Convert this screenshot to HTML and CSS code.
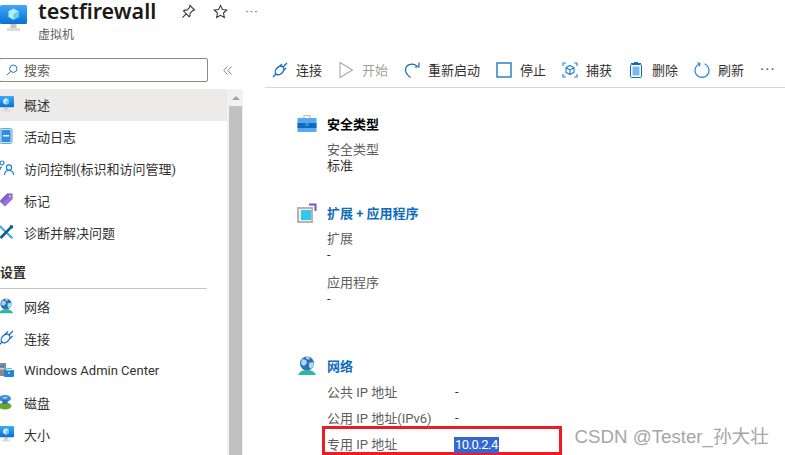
FILE: index.html
```html
<!DOCTYPE html>
<html lang="zh">
<head>
    <meta charset="UTF-8">
    <meta name="viewport" content="width=device-width, initial-scale=1.0">
    <title>testfirewall</title>
    <link rel="stylesheet" href="styles.css">
</head>
<body>
    <svg class="defs" width="0" height="0">
        <defs>
            <linearGradient id="screen" x1="0" y1="0" x2="0" y2="1">
                <stop offset="0" stop-color="#3fa9f5"/>
                <stop offset="1" stop-color="#0a6fd6"/>
            </linearGradient>
            <symbol id="vm" viewBox="0 0 27 27">
                <rect x="0" y="0" width="27" height="19" rx="1.5" fill="url(#screen)"/>
                <path d="M13.5 3.5l5 2.8v5.6l-5 2.9-5-2.9V6.300z" fill="#b5ecf7"/>
                <path d="M13.500 9l5-2.700v5.600l-5 2.900z" fill="#5fd0ea"/>
                <path d="M10.500 19h6v4h-6z" fill="#c4c4c4"/>
                <path d="M7 23h13v3H7z" fill="#dadada"/>
            </symbol>
            <symbol id="globe" viewBox="0 0 20 20">
                <circle cx="10" cy="7.500" r="7" fill="#2f6fb8"/>
                <path d="M5 3l4 1 1 3-3 3-3-2zM12 7l4-1 1 3-3 4-2-2zM9 0.800l4 1-1 2-3-1z" fill="#a5dcf0"/>
                <path d="M1 19c2-4 5-5 9-5s7 1 9 5z" fill="#2fb8a0"/>
            </symbol>
        </defs>
    </svg>

    <header class="title-bar">
        <svg class="title-icon"><use href="#vm"/></svg>
        <div class="title-text">
            <div class="title-row">
                <h1>testfirewall</h1>
                <svg class="title-action" viewBox="0 0 16 16" fill="none" stroke="#333" stroke-width="1.100"><path d="M9.500 1.500l5 5-2 .5-3 3 .2 2.500-1 1-6-6 1-1 2.500.2 3-3zM5.500 10.500L1.500 14.500"/></svg>
                <svg class="title-action" viewBox="0 0 16 16" fill="none" stroke="#333" stroke-width="1.100"><path d="M8 1.500l2 4.300 4.700.6-3.500 3.200.9 4.700L8 12l-4.100 2.300.9-4.700L1.300 6.400 6 5.800z"/></svg>
                <span class="title-more">···</span>
            </div>
            <div class="subtitle">虚拟机</div>
        </div>
    </header>

    <div class="main">
        <aside class="sidebar">
            <div class="search-row">
                <div class="search-box">
                    <svg class="search-icon" viewBox="0 0 14 14" fill="none" stroke="#0f6cbd" stroke-width="1.100"><circle cx="8.500" cy="5.500" r="4.300"/><path d="M5.500 8.500L1 13"/></svg>
                    <span class="search-text">搜索</span>
                </div>
                <svg class="collapse" viewBox="0 0 9 9" fill="none" stroke="#8a8886"><path d="M4.500 .5L.8 4.500l3.700 4M8.500 .5L4.800 4.500l3.700 4"/></svg>
            </div>
            <div class="nav-wrap">
                <nav class="nav">
                    <a class="nav-item active"><svg class="nav-icon"><use href="#vm"/></svg>概述</a>
                    <a class="nav-item">
                        <svg class="nav-icon" viewBox="0 0 16 16"><rect x="2" y="0.500" width="12" height="15" rx="1.500" fill="#cfe6f8" stroke="#5ea9e6"/><rect x="3.500" y="2" width="9" height="12" fill="#2f8ee0"/><rect x="5" y="7" width="6" height="1.500" fill="#fff"/></svg>
                        活动日志
                    </a>
                    <a class="nav-item">
                        <svg class="nav-icon" viewBox="0 0 16 16" fill="none" stroke="#1f7fd6" stroke-width="1.200"><circle cx="4" cy="3" r="2"/><path d="M2 10c0-2 .5-3 2-3"/><circle cx="11" cy="7.500" r="2.600"/><path d="M6.500 15c0-3 2-4.500 4.500-4.500s4.500 1.500 4.500 4.500"/></svg>
                        访问控制(标识和访问管理)
                    </a>
                    <a class="nav-item">
                        <svg class="nav-icon" viewBox="0 0 16 16"><path d="M9 1.500h5.500V7l-7.500 7.500-5.500-5.500z" fill="#8661c5"/><path d="M14.500 1.500V7l-7.500 7.500-2.700-2.700z" fill="#a67af4" opacity=".6"/><circle cx="11.800" cy="4.200" r="1" fill="#e4d6fa"/></svg>
                        标记
                    </a>
                    <a class="nav-item">
                        <svg class="nav-icon" viewBox="0 0 16 16"><path d="M2 1L.8 2.500 13.500 15l1.700-1.500z" fill="#38abd6"/><path d="M15 1.500l-2.500-.5-1 2L1.500 13l2 2L13 5l2-1z" fill="#0f5c87"/></svg>
                        诊断并解决问题
                    </a>
                    <div class="nav-heading">设置</div>
                    <a class="nav-item"><svg class="nav-icon"><use href="#globe"/></svg>网络</a>
                    <a class="nav-item">
                        <svg class="nav-icon" viewBox="0 0 16 16" fill="none" stroke="#1f6fd0" stroke-width="1.300"><ellipse cx="7.500" cy="8.500" rx="3.500" ry="5" transform="rotate(45 7.500 8.500)"/><path d="M1 15l3-3M11 5l4-4M7 4.500l3-3M11.500 9l3-3"/></svg>
                        连接
                    </a>
                    <a class="nav-item">
                        <svg class="nav-icon" viewBox="0 0 16 16"><rect x="0" y="1" width="8" height="13" fill="#8a8a8a"/><rect x="1.500" y="3" width="5" height="2" fill="#2f8ee0"/><rect x="1.500" y="6" width="5" height="1.500" fill="#d0d0d0"/><rect x="6" y="8" width="10" height="7" rx="1" fill="#1f86dc"/><rect x="9" y="6.500" width="4" height="2" fill="none" stroke="#5aaeea"/><rect x="10" y="10.500" width="2" height="1" fill="#fff"/></svg>
                        Windows Admin Center
                    </a>
                    <a class="nav-item">
                        <svg class="nav-icon" viewBox="0 0 16 16"><ellipse cx="7" cy="12" rx="6.500" ry="3.500" fill="#6aa52b"/><ellipse cx="7" cy="4.500" rx="6" ry="3.500" fill="#3c8ad6"/><rect x="4.500" y="6" width="5" height="4" fill="#2e6fb3"/><ellipse cx="7" cy="3.800" rx="2.500" ry="1" fill="#a5d5f5"/></svg>
                        磁盘
                    </a>
                    <a class="nav-item"><svg class="nav-icon"><use href="#vm"/></svg>大小</a>
                </nav>
                <div class="scrollbar">
                    <div class="scroll-up"></div>
                    <div class="scroll-thumb"></div>
                </div>
            </div>
        </aside>

        <section class="content">
            <div class="toolbar">
                <button class="tool">
                    <svg viewBox="0 0 16 16" fill="none" stroke="#0f6cbd" stroke-width="1.300"><ellipse cx="7.500" cy="8.500" rx="3.500" ry="5" transform="rotate(45 7.500 8.500)"/><path d="M1 15l3-3M11 5l4-4M7.500 4.500l2.500-2.500M11.500 8.500l2.500-2.500"/></svg>
                    连接
                </button>
                <button class="tool disabled">
                    <svg viewBox="0 0 16 16" fill="none" stroke="#a8a8a8" stroke-width="1.100"><path d="M2 .5l12.500 7.500L2 15.500z"/></svg>
                    开始
                </button>
                <button class="tool">
                    <svg viewBox="0 0 16 16" fill="none" stroke="#0f6cbd" stroke-width="1.200"><path d="M13.500 4.500C10 .5 1.500 1.500 1.500 8c0 3 2.500 5.500 5 7.500"/><path d="M15 .5v4.500h-4.500"/></svg>
                    重新启动
                </button>
                <button class="tool">
                    <svg viewBox="0 0 16 16" fill="none" stroke="#0f6cbd" stroke-width="1.300"><rect x="1" y="1" width="14" height="14"/></svg>
                    停止
                </button>
                <button class="tool">
                    <svg viewBox="0 0 16 16" fill="none" stroke="#2b88d8" stroke-width="1.200"><path d="M1 4V1h3M12 1h3v3M15 12v3h-3M4 15H1v-3"/><path d="M8 3.500l4 2.200v4.600l-4 2.200-4-2.200V5.700zM4 5.700l4 2.300 4-2.300M8 8v4.500"/></svg>
                    捕获
                </button>
                <button class="tool">
                    <svg viewBox="0 0 16 16"><path d="M3 1.500h10M6 .500h4" stroke="#0f6cbd" fill="none"/><rect x="2.500" y="2.500" width="11" height="13" rx="1" fill="#fff" stroke="#0f6cbd"/><rect x="4.500" y="4.500" width="7" height="9" fill="#7fb8e8"/></svg>
                    删除
                </button>
                <button class="tool">
                    <svg viewBox="0 0 16 16" fill="none" stroke="#1f86dc" stroke-width="1.200"><path d="M5.500 1.800A7 7 0 1 0 10.500 1.800"/><path d="M3.500 .500l2.500 1.300-1 2.700"/></svg>
                    刷新
                </button>
                <span class="tool-more">···</span>
            </div>

            <div class="details">
                <div class="section">
                    <h3 class="section-title">
                        <svg viewBox="0 0 20 20"><path d="M7 4V1.500h6V4" fill="none" stroke="#bbb" stroke-width="1.200"/><rect x="0.500" y="4" width="19" height="14" fill="#5ba8ec"/><rect x="0.500" y="9" width="19" height="5" fill="#0f6cbd"/><rect x="8" y="9" width="4" height="3" fill="#2f8ee0"/></svg>
                        <span>安全类型</span>
                    </h3>
                    <div class="stack">
                        <div class="label">安全类型</div>
                        <div class="value">标准</div>
                    </div>
                </div>

                <div class="section">
                    <h3 class="section-title link">
                        <svg viewBox="0 0 20 20"><path d="M3 5h12v14H1V5z" fill="#f2f2f2" stroke="#b4b4b4" stroke-width="2"/><rect x="4" y="7" width="10" height="10" fill="#32c8ee"/><path d="M12 1.500h6.500V8" fill="none" stroke="#7a4fc9" stroke-width="2"/></svg>
                        <span>扩展 + 应用程序</span>
                    </h3>
                    <div class="stack">
                        <div class="label">扩展</div>
                        <div class="value">-</div>
                    </div>
                    <div class="stack second">
                        <div class="label">应用程序</div>
                        <div class="value">-</div>
                    </div>
                </div>

                <div class="section network">
                    <h3 class="section-title link">
                        <svg><use href="#globe"/></svg>
                        <span>网络</span>
                    </h3>
                    <div class="pair"><span class="label">公共 IP 地址</span><span class="value">-</span></div>
                    <div class="pair"><span class="label">公用 IP 地址(IPv6)</span><span class="value">-</span></div>
                    <div class="pair marked"><span class="label">专用 IP 地址</span><span class="value selected">10.0.2.4</span></div>
                </div>
            </div>
        </section>
    </div>

    <div class="watermark">CSDN @Tester_孙大壮</div>
</body>
</html>
```

FILE: styles.css
```css
* {
    box-sizing: border-box;
}
html, body {
    height: 100%;
}
body {
    margin: 0;
    overflow: hidden;
    background: #fff;
    color: #323130;
    font-family: Roboto, "Noto Sans CJK SC", sans-serif;
    font-size: 13px;
    position: relative;
}
.defs {
    position: absolute;
}

/* header */
.title-bar {
    display: flex;
    height: 50px;
}
.title-icon {
    width: 27px;
    height: 27px;
    margin: 5px 11px 0 0;
    flex: none;
}
.title-row {
    display: flex;
    align-items: center;
    height: 20px;
    margin-top: 1px;
}
.title-row h1 {
    margin: 0 25px 0 0;
    font-family: "Noto Sans", sans-serif;
    font-size: 21.5px;
    font-weight: 600;
    line-height: 20px;
    color: #1b1a19;
}
.title-action {
    width: 15px;
    height: 15px;
    margin-right: 17px;
}
.title-more {
    color: #666;
    line-height: 1;
    letter-spacing: 1px;
}
.subtitle {
    margin-top: 6px;
    font-size: 12px;
    line-height: 16px;
    color: #605e5c;
}

/* left menu */
.main {
    display: flex;
    height: 405px;
}
.sidebar {
    width: 243px;
    flex: none;
}
.search-row {
    display: flex;
    align-items: flex-start;
    height: 39px;
    padding-top: 8px;
}
.search-box {
    display: flex;
    align-items: center;
    gap: 6px;
    width: 209px;
    height: 24px;
    margin-left: -1px;
    padding-left: 6px;
    border: 1px solid #8a8886;
    border-radius: 2px;
    color: #605e5c;
}
.search-icon {
    width: 12px;
    height: 14px;
}
.search-text {
    padding-bottom: 2px;
}
.collapse {
    width: 9px;
    height: 9px;
    margin: 8px 0 0 15px;
}
.nav-wrap {
    display: flex;
}
.nav {
    width: 227px;
    flex: none;
}
.nav-item {
    display: flex;
    align-items: center;
    height: 32px;
    padding-bottom: 2px;
    color: #323130;
}
.nav-item.active {
    background: #edebe9;
}
.nav-icon {
    width: 16px;
    height: 16px;
    margin: 0 10px 0 -2px;
    flex: none;
}
.nav-heading {
    width: 207px;
    height: 32px;
    margin: 8px 0 2px;
    line-height: 32px;
    font-weight: 600;
    border-bottom: 1px solid #c8c6c4;
}
.scrollbar {
    width: 16px;
    height: 366px;
    padding: 0 1px 0 2px;
    background: #f1f1f1;
}
.scroll-up {
    width: 0;
    height: 0;
    margin: 7px auto 6px;
    border-left: 4px solid transparent;
    border-right: 4px solid transparent;
    border-bottom: 4px solid #a3a3a3;
}
.scroll-thumb {
    height: 350px;
    background: #c1c1c1;
}

/* command bar */
.content {
    flex: 1;
    min-width: 0;
    padding-left: 22px;
}
.toolbar {
    display: flex;
    align-items: center;
    height: 38px;
    padding: 2px 0 0 7px;
    border-bottom: 1px solid #d6d6d6;
}
.tool {
    display: flex;
    align-items: center;
    gap: 8px;
    margin-right: 16px;
    padding: 0;
    border: none;
    background: none;
    color: #323130;
    font: inherit;
    white-space: nowrap;
}
.tool svg {
    width: 16px;
    height: 16px;
    flex: none;
}
.tool.disabled {
    color: #a19f9d;
}
.tool-more {
    font-size: 16px;
    letter-spacing: 1px;
    color: #555;
}

/* essentials */
.details {
    padding: 26px 0 0 32px;
}
.section {
    height: 89px;
}
.section + .section {
    height: 153px;
}
.section.network {
    height: auto;
}
.section-title {
    display: flex;
    align-items: center;
    gap: 10px;
    height: 20px;
    margin: 0 0 7px;
    font-size: 13px;
    font-weight: 600;
    color: #000;
}
.section-title svg {
    width: 20px;
    height: 20px;
    flex: none;
}
.section-title span {
    padding-bottom: 2px;
}
.section-title.link {
    color: #0f6cbd;
}
.network .section-title {
    margin-bottom: 2px;
}
.stack {
    padding-left: 30px;
    line-height: 17px;
}
.stack .value {
    margin-top: -1px;
}
.stack.second {
    margin-top: 11px;
}
.label {
    color: #605e5c;
}
.value {
    color: #323130;
}
.pair {
    display: flex;
    align-items: center;
    height: 26px;
    padding-left: 30px;
}
.pair .label {
    width: 128px;
    white-space: nowrap;
}
.pair.marked {
    align-items: flex-end;
    width: 240px;
    height: 29px;
    margin: -4px 0 0 25px;
    padding: 0 0 0 2px;
    border: 3px solid #ed1c24;
}
.marked .label {
    margin-bottom: -1px;
}
.selected {
    margin: 0 0 -1px -1px;
    padding: 0 1px;
    background: #3367d1;
    color: #fff;
    line-height: 16px;
    letter-spacing: -.5px;
}

/* overlay from the capture tool */
.watermark {
    position: absolute;
    right: 16px;
    bottom: 7px;
    font-family: "Liberation Sans", "Noto Sans CJK SC", sans-serif;
    font-size: 18.7px;
    color: #a6a6a6;
}
```
